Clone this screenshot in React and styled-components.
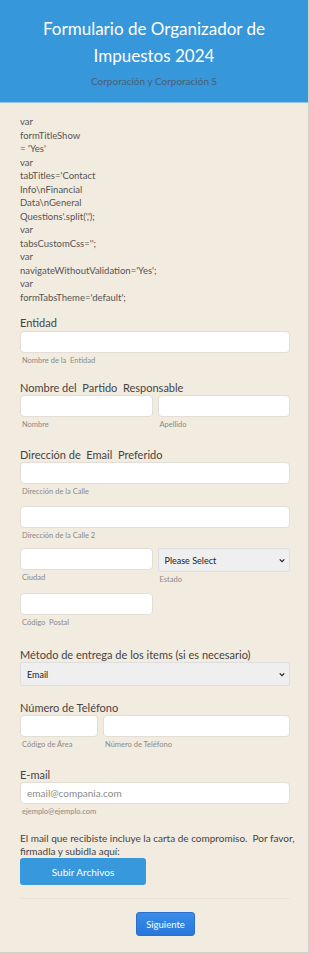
import styled, { createGlobalStyle } from "styled-components";

const GlobalStyle = createGlobalStyle`
  body {
    margin: 0;
    background: #f2ebdf;
    font-family: Lato, "Open Sans", sans-serif;
  }
  * { box-sizing: border-box; }
`;

const CODE_LINES = [
  "var",
  "formTitleShow",
  "= 'Yes'",
  "var",
  "tabTitles='Contact",
  "Info\\nFinancial",
  "Data\\nGeneral",
  "Questions'.split(',');",
  "var",
  "tabsCustomCss='';",
  "var",
  "navigateWithoutValidation='Yes';",
  "var",
  "formTabsTheme='default';",
];

function Dropdown({ value, options }) {
  return (
    <SelectWrap>
      <Select defaultValue={value}>
        {options.map((o) => (
          <option key={o} value={o}>
            {o}
          </option>
        ))}
      </Select>
      <Chevron viewBox="0 0 8 6" width="6" height="5">
        <path d="M1 1.5 L4 4.5 L7 1.5" fill="none" stroke="#222" strokeWidth="1.6" />
      </Chevron>
    </SelectWrap>
  );
}

export default function App() {
  return (
    <>
      <GlobalStyle />
      <Page>
        <Header>
          <Title>Formulario de Organizador de Impuestos 2024</Title>
          <Subtitle>Corporación y Corporación S</Subtitle>
        </Header>

        <Body>
          <Code>
            {CODE_LINES.map((line, i) => (
              <div key={i}>{line}</div>
            ))}
          </Code>

          <Label $mt={12}>Entidad</Label>
          <Input $mt={1} />
          <SubLabel>Nombre de la&nbsp; Entidad</SubLabel>

          <Label $mt={15}>Nombre del&nbsp; Partido&nbsp; Responsable</Label>
          <Row>
            <Col>
              <Input />
              <SubLabel>Nombre</SubLabel>
            </Col>
            <Col>
              <Input />
              <SubLabel>Apellido</SubLabel>
            </Col>
          </Row>

          <Label $mt={18}>Dirección de&nbsp; Email&nbsp; Preferido</Label>
          <Input />
          <SubLabel>Dirección de la Calle</SubLabel>
          <Input $mt={9} />
          <SubLabel>Dirección de la Calle 2</SubLabel>
          <Row $mt={7}>
            <Col>
              <Input />
              <SubLabel>Ciudad</SubLabel>
            </Col>
            <Col>
              <Dropdown value="Please Select" options={["Please Select"]} />
              <SubLabel>Estado</SubLabel>
            </Col>
          </Row>
          <Row $mt={8}>
            <Col>
              <Input />
              <SubLabel>Código&nbsp; Postal</SubLabel>
            </Col>
            <Col />
          </Row>

          <Label $mt={20}>Método de entrega de los items (si es necesario)</Label>
          <Dropdown value="Email" options={["Email"]} />

          <Label $mt={15}>Número de Teléfono</Label>
          <PhoneRow>
            <div>
              <Input />
              <SubLabel>Código de Área</SubLabel>
            </div>
            <div>
              <Input />
              <SubLabel>Número de Teléfono</SubLabel>
            </div>
          </PhoneRow>

          <Label $mt={18}>E-mail</Label>
          <Input placeholder="email@compania.com" />
          <SubLabel>ejemplo@ejemplo.com</SubLabel>

          <Paragraph>
            <span>El mail que recibiste incluye la carta de compromiso.&nbsp; Por favor,</span>
            <br />
            firmadla y subidla aquí:
          </Paragraph>
          <UploadButton type="button">Subir Archivos</UploadButton>

          <Divider />

          <Footer>
            <NextButton type="button">Siguiente</NextButton>
          </Footer>
        </Body>
      </Page>
    </>
  );
}

const Page = styled.div`
  width: 310px;
  min-height: 954px;
  border-right: 2px solid #d6d1c8;
  border-bottom: 2px solid #d6d1c8;
  background: #f2ebdf;
`;

const Header = styled.div`
  background: #3797db;
  border-bottom: 1px solid #8fc3ea;
  padding: 15px 20px 14px;
  text-align: center;
`;

const Title = styled.h1`
  margin: 0;
  color: #ffffff;
  font-size: 17px;
  font-weight: 400;
  line-height: 27px;
`;

const Subtitle = styled.div`
  margin-top: 5px;
  color: #4b5e70;
  font-size: 10px;
  line-height: 14px;
`;

const Body = styled.div`
  padding: 12px 18px 15px 20px;
`;

const Code = styled.div`
  color: #555555;
  font-size: 9.5px;
  line-height: 13.5px;
`;

const Label = styled.div`
  margin-top: ${({ $mt }) => $mt || 0}px;
  color: #444444;
  font-size: 11px;
  line-height: 14px;
`;

const Input = styled.input`
  display: block;
  width: 100%;
  height: 22px;
  margin-top: ${({ $mt }) => $mt || 0}px;
  padding: 0 6px;
  border: 1px solid #e2ded6;
  border-radius: 4px;
  background: #ffffff;
  font-family: inherit;
  font-size: 10px;
  color: #333333;
  outline: none;

  &::placeholder {
    color: #8a8a8a;
  }
`;

const SelectWrap = styled.div`
  position: relative;
`;

const Select = styled.select`
  display: block;
  width: 100%;
  height: 24px;
  padding: 0 6px;
  appearance: none;
  border: 1px solid #dedede;
  border-radius: 2px;
  background: #efefef;
  font-family: inherit;
  font-size: 9px;
  color: #222222;
`;

const Chevron = styled.svg`
  position: absolute;
  right: 5px;
  top: 10px;
  pointer-events: none;
`;

const SubLabel = styled.div`
  margin-top: 3px;
  padding-left: 2px;
  color: #8a8a8a;
  font-size: 7.5px;
  line-height: 10px;
`;

const Row = styled.div`
  display: flex;
  gap: 5px;
  margin-top: ${({ $mt }) => $mt || 0}px;
`;

const Col = styled.div`
  flex: 1;
  min-width: 0;
`;

const PhoneRow = styled.div`
  display: grid;
  grid-template-columns: 78px 1fr;
  gap: 5px;
`;

const Paragraph = styled.p`
  margin: 15px 0 0;
  color: #444444;
  font-size: 10px;
  line-height: 13px;

  span {
    white-space: nowrap;
  }
`;

const UploadButton = styled.button`
  display: block;
  width: 126px;
  height: 27px;
  border: none;
  border-radius: 3px;
  background: #3898dc;
  color: #ffffff;
  font-family: inherit;
  font-size: 10px;
  font-weight: 400;
`;

const Divider = styled.hr`
  margin: 13px 0 0;
  border: none;
  border-top: 1px solid #ebe4d6;
`;

const Footer = styled.div`
  display: flex;
  justify-content: center;
  margin-top: 13px;
  padding-left: 21px;
`;

const NextButton = styled.button`
  width: 59px;
  height: 24px;
  border: 1px solid #2a6fc9;
  border-radius: 3px;
  background: linear-gradient(#3a8ee8, #2776dc);
  color: #ffffff;
  font-family: inherit;
  font-size: 9.5px;
  font-weight: 400;
`;
